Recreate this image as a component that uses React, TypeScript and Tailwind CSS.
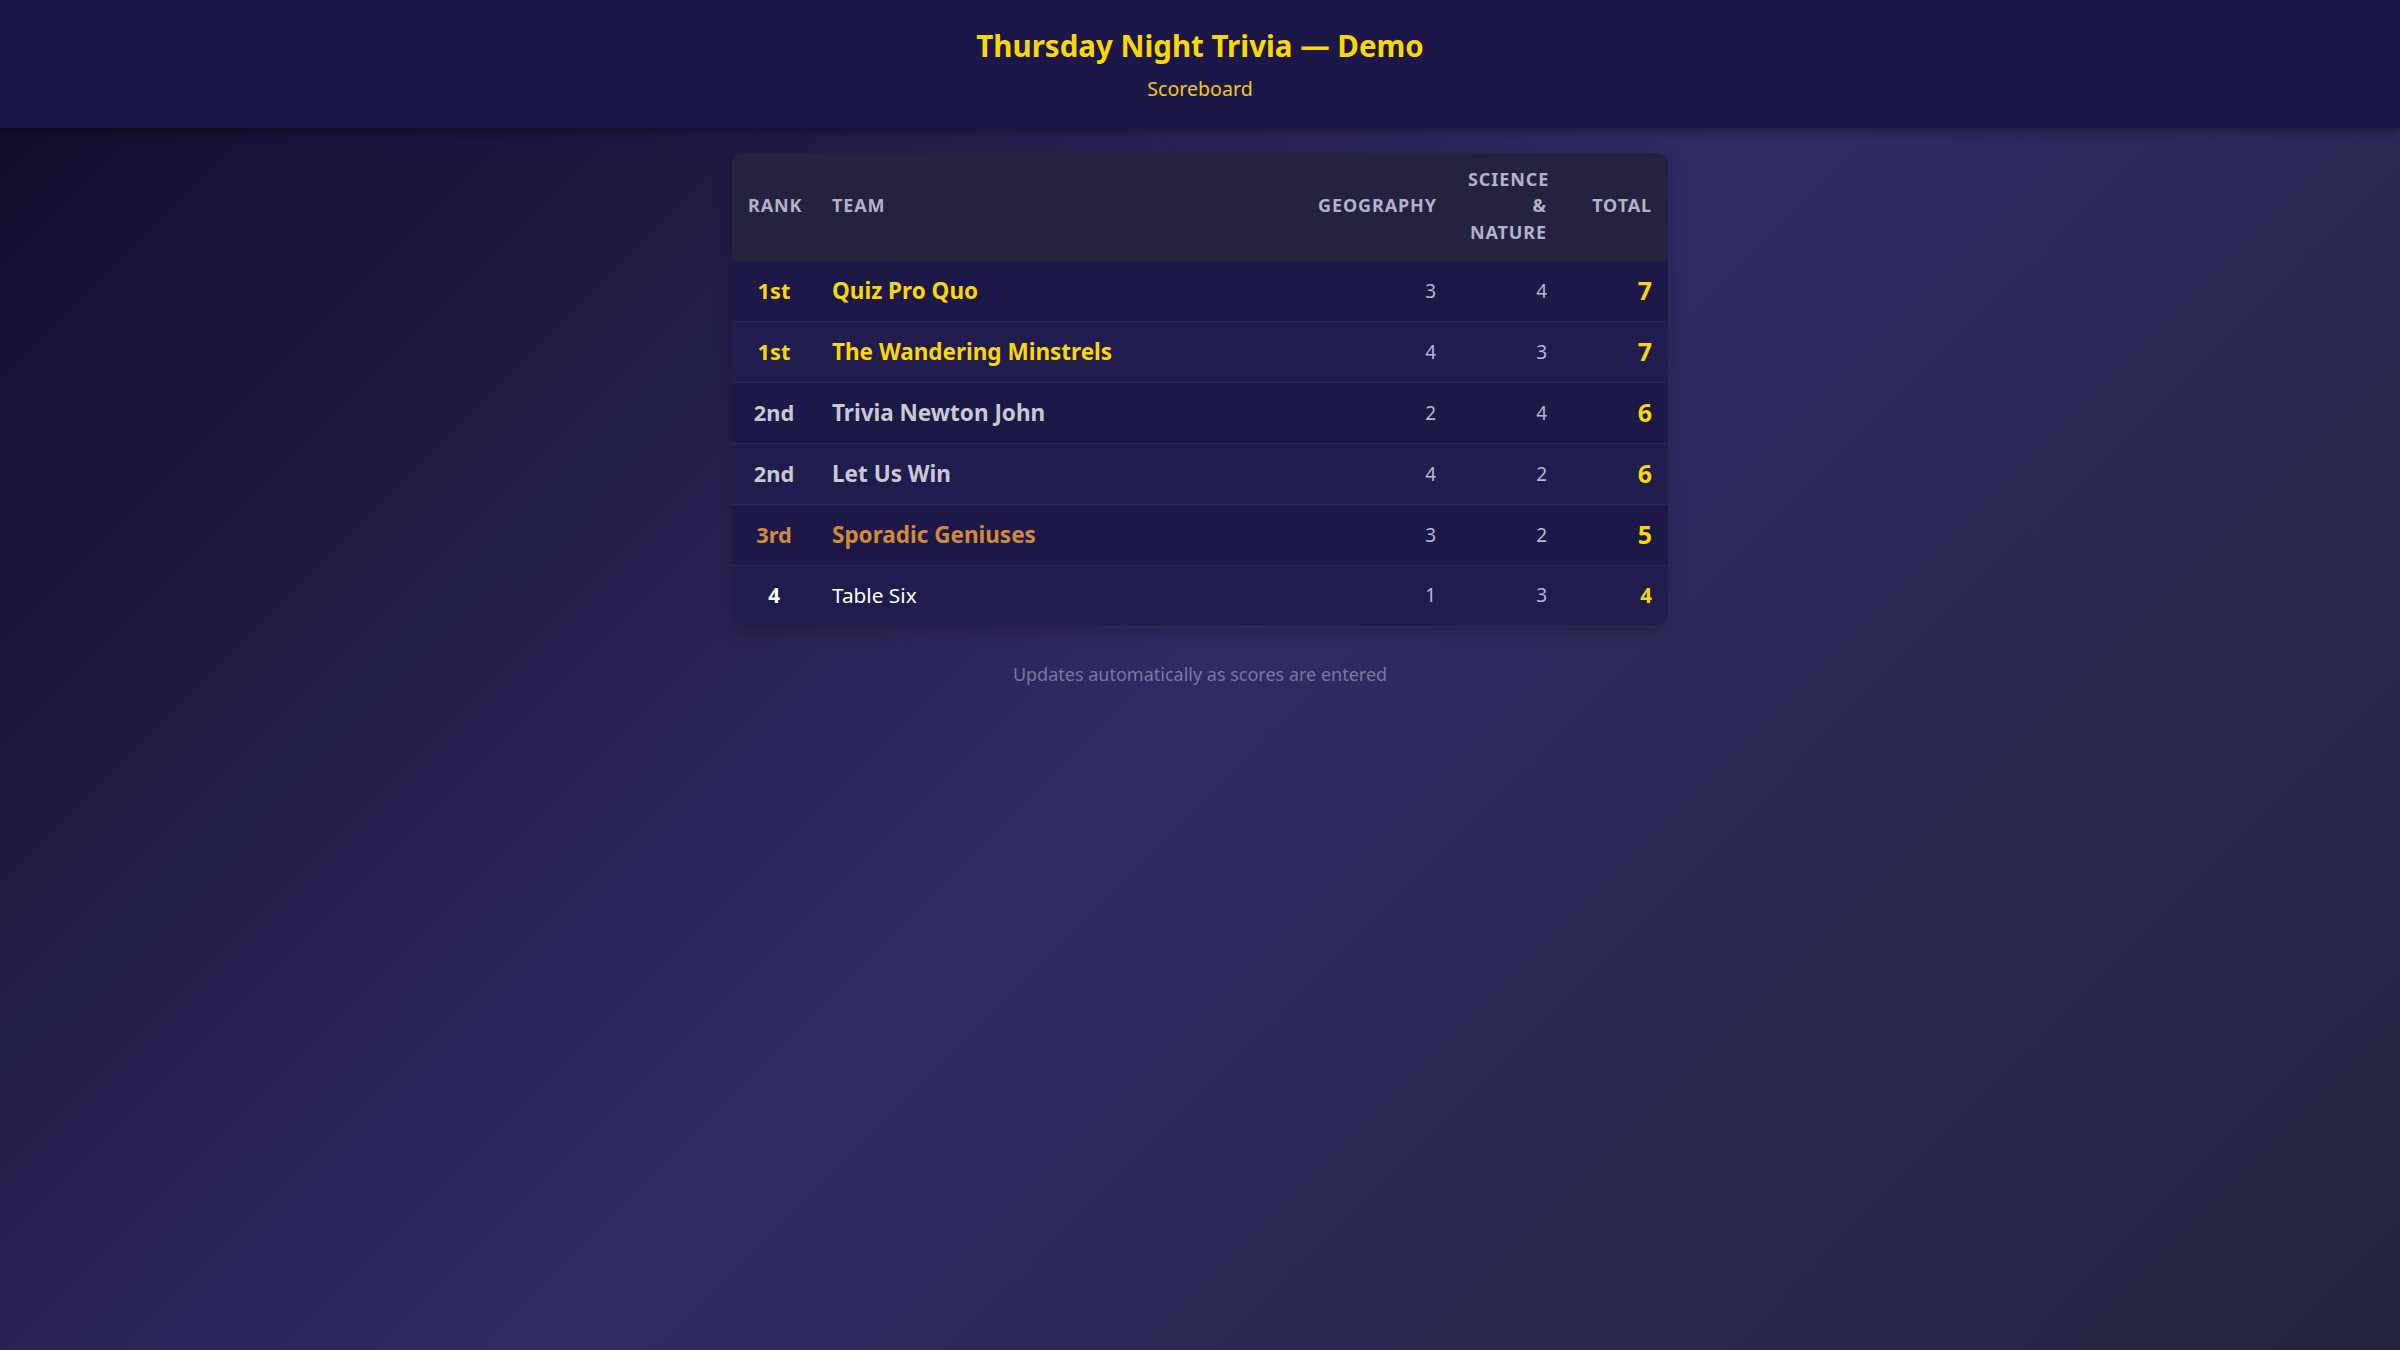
import React from "react";

type Row = { rank: string; team: string; geo: number; sci: number; total: number; tier: 1 | 2 | 3 | 4 };

const rows: Row[] = [
  { rank: "1st", team: "Quiz Pro Quo", geo: 3, sci: 4, total: 7, tier: 1 },
  { rank: "1st", team: "The Wandering Minstrels", geo: 4, sci: 3, total: 7, tier: 1 },
  { rank: "2nd", team: "Trivia Newton John", geo: 2, sci: 4, total: 6, tier: 2 },
  { rank: "2nd", team: "Let Us Win", geo: 4, sci: 2, total: 6, tier: 2 },
  { rank: "3rd", team: "Sporadic Geniuses", geo: 3, sci: 2, total: 5, tier: 3 },
  { rank: "4", team: "Table Six", geo: 1, sci: 3, total: 4, tier: 4 },
];

const tierColor: Record<number, string> = {
  1: "text-[#ffd700]",
  2: "text-[#c9c9d4]",
  3: "text-[#d4883a]",
  4: "text-white",
};

export default function App() {
  return (
    <div
      className="min-h-screen w-full bg-[linear-gradient(135deg,#0f0c29_0%,#302b63_50%,#24243e_100%)]"
      style={{ fontFamily: '"Noto Sans", "Open Sans", sans-serif' }}
    >
      <header className="h-[128px] bg-[#1b1849] shadow-[0_2px_10px_rgba(0,0,0,0.45)] flex flex-col items-center pt-[28px]">
        <h1 className="text-[29.5px] leading-[36px] font-bold text-[#ffd700]">Thursday Night Trivia — Demo</h1>
        <div className="mt-[11px] text-[19.6px] leading-[28px] text-[#f0c820]">Scoreboard</div>
      </header>

      <div className="mx-auto mt-[25px] w-[936px] rounded-xl overflow-hidden shadow-[0_6px_18px_rgba(0,0,0,0.2)]">
        <div className="grid grid-cols-[84px_1fr_150px_111px_105px] h-[108px] pb-[3px] items-center bg-[#25223f] text-[#b3b2c8] text-[18px] leading-[26.5px] font-bold uppercase tracking-[0.05em]">
          <div className="px-4 text-center">Rank</div>
          <div className="px-4">Team</div>
          <div className="px-4 text-right">Geography</div>
          <div className="px-4 text-right">
            Science
            <br />&amp;<br />
            Nature
          </div>
          <div className="px-4 text-right">Total</div>
        </div>
        {rows.map((r, i) => {
          const last = i === rows.length - 1;
          return (
            <div
              key={i}
              className={
                "grid grid-cols-[84px_1fr_150px_111px_105px] items-center " +
                (i % 2 === 0 ? "bg-[#1c1848] " : "bg-[#201c4e] ") +
                (last ? "h-[59px]" : "h-[61px] border-b border-[#2a2656]")
              }
            >
              <div className={"px-4 text-center font-bold whitespace-nowrap " + tierColor[r.tier] + (last ? " text-[20.5px]" : " text-[21.8px]")}>
                {r.rank}
              </div>
              <div className={"px-4 whitespace-nowrap " + tierColor[r.tier] + (last ? " font-normal text-[20.8px]" : " font-bold text-[22.5px]")}>
                {r.team}
              </div>
              <div className="px-4 text-right text-[19px] text-[#b9b6d6]">{r.geo}</div>
              <div className="px-4 text-right text-[19px] text-[#b9b6d6]">{r.sci}</div>
              <div className={"px-4 text-right font-bold text-[#ffd700] " + (last ? "text-[20.5px]" : "text-[25px]")}>{r.total}</div>
            </div>
          );
        })}
      </div>

      <p className="mt-[36px] text-center text-[18px] text-[#7a77a0]">Updates automatically as scores are entered</p>
    </div>
  );
}
